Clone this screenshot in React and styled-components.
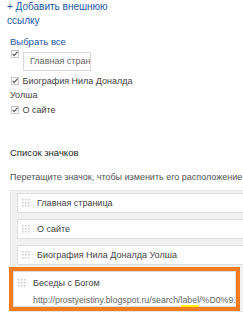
import React from "react";
import styled, { createGlobalStyle } from "styled-components";

const GlobalStyle = createGlobalStyle`
  body {
    margin: 0;
    background: #ffffff;
    font-family: "Liberation Sans", Arial, sans-serif;
    overflow: hidden;
  }
`;

const Page = styled.div`
  width: 243px;
  height: 320px;
  padding-left: 10px;
  box-sizing: border-box;
  overflow: hidden;
`;

const TopBlock = styled.div`
  width: 135px;
`;

const AddLink = styled.div`
  margin-left: -3px;
  width: 110px;
  color: #2357a8;
  font-size: 10px;
  line-height: 14px;
`;

const SelectAll = styled.div`
  margin-top: 7px;
  color: #2357a8;
  font-size: 9.5px;
  line-height: 14px;
`;

const CheckRow = styled.div`
  margin-top: ${(p) => p.$top || 0}px;
  color: #444;
  font-size: 9px;
  line-height: 14px;
  display: ${(p) => (p.$flex ? "flex" : "block")};
  align-items: flex-start;
  gap: 3px;
`;

const Box = styled.svg`
  width: 8px;
  height: 8px;
  margin-left: 1px;
  margin-right: 1px;
  vertical-align: -1px;
  flex: none;
`;

const NameInput = styled.div`
  margin-top: 2px;
  width: 68px;
  height: 19px;
  box-sizing: border-box;
  border: 1px solid #d9d9d9;
  padding-left: 6px;
  color: #666;
  font-size: 9px;
  line-height: 17px;
  white-space: nowrap;
  overflow: hidden;
`;

const SectionTitle = styled.div`
  margin-top: 29px;
  color: #1e1e1e;
  font-size: 9.5px;
  line-height: 14px;
`;

const Hint = styled.div`
  margin-top: 10px;
  color: #555;
  font-size: 9px;
  line-height: 14px;
  white-space: nowrap;
`;

const List = styled.div`
  margin-top: 6px;
  margin-right: -20px;
  background: #f1f1f1;
  border: 1px solid #e6e6e6;
  padding: 2px 0 4px 6px;
  display: flex;
  flex-direction: column;
  gap: 6px;
`;

const Item = styled.div`
  position: relative;
  box-sizing: border-box;
  background: #fff;
  border: 1px solid #dedede;
  display: flex;
  align-items: ${(p) => (p.$highlight ? "flex-start" : "center")};
  gap: 7px;
  padding: ${(p) => (p.$highlight ? "4px 0 0 4px" : "0 0 0 4px")};
  height: ${(p) => (p.$highlight ? 36 : 20)}px;
  overflow: hidden;
  ${(p) =>
    p.$highlight &&
    `
    margin-left: -4px;
    width: 223px;
    overflow: visible;
    outline: 4px solid #f47b20;
  `}
`;

const Grip = styled.svg`
  width: 8px;
  height: 8px;
  flex: none;
  margin-top: ${(p) => (p.$highlight ? 3 : 0)}px;
`;

const ItemBody = styled.div`
  min-width: 0;
  overflow: hidden;
`;

const ItemText = styled.div`
  color: #444;
  font-size: 9px;
  line-height: 14px;
  white-space: nowrap;
  overflow: hidden;
`;

const Url = styled.div`
  margin-top: 4px;
  color: #666;
  font-size: 8.8px;
  line-height: 13px;
  white-space: nowrap;
`;

const Marked = styled.span`
  border-bottom: 2px solid #fff200;
`;

function CheckBox() {
  return (
    <Box viewBox="0 0 8 8">
      <rect x="0.5" y="0.5" width="7" height="7" fill="#fff" stroke="#c8c8c8" />
      <path d="M1.6 3.9 L3.2 5.7 L6.6 1.6" fill="none" stroke="#555" strokeWidth="1.1" />
    </Box>
  );
}

function GripDots({ highlight }) {
  const dots = [];
  for (let r = 0; r < 3; r++) {
    for (let c = 0; c < 3; c++) {
      dots.push(<rect key={r * 3 + c} x={c * 3} y={r * 3} width="1.5" height="1.5" fill="#c9c9c9" />);
    }
  }
  return (
    <Grip viewBox="0 0 8 8" $highlight={highlight}>
      {dots}
    </Grip>
  );
}

const items = ["Главная страница", "О сайте", "Биография Нила Доналда Уолша"];

export default function App() {
  return (
    <Page>
      <GlobalStyle />
      <TopBlock>
        <AddLink>+ Добавить внешнюю ссылку</AddLink>
        <SelectAll>Выбрать все</SelectAll>
        <CheckRow $flex $top={1}>
          <CheckBox />
          <NameInput>Главная страница</NameInput>
        </CheckRow>
        <CheckRow $top={3}>
          <CheckBox /> Биография Нила Доналда Уолша
        </CheckRow>
        <CheckRow $top={1}>
          <CheckBox /> О сайте
        </CheckRow>
      </TopBlock>
      <SectionTitle>Список значков</SectionTitle>
      <Hint>Перетащите значок, чтобы изменить его расположение</Hint>
      <List>
        {items.map((name) => (
          <Item key={name}>
            <GripDots />
            <ItemText>{name}</ItemText>
          </Item>
        ))}
        <Item $highlight>
          <GripDots highlight />
          <ItemBody>
            <ItemText>Беседы с Богом</ItemText>
            <Url>
              http://prostyeistiny.blogspot.ru/search/<Marked>label</Marked>/%D0%91%D0%B5%D1%81
            </Url>
          </ItemBody>
        </Item>
      </List>
    </Page>
  );
}
